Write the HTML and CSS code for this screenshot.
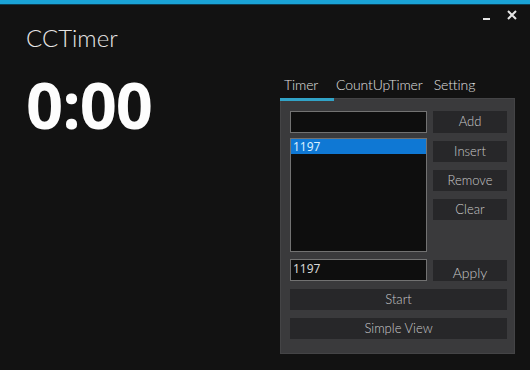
FILE: index.html
```html
<!DOCTYPE html>
<html lang="en">
  <head>
    <meta charset="UTF-8" />
    <title>CCTimer</title>
    <link rel="stylesheet" href="styles.css">
  </head>
  <body>
    <div class="topbar"></div>
    <div class="app">
      <div class="left">
        <div class="titulo">CCTimer</div>
        <div class="clock">0:00</div>
      </div>
      <div class="right">
        <div class="win-ctrl">
          <svg width="40" height="16" viewBox="0 0 40 16">
            <rect x="2" y="10" width="7" height="2" fill="#e6e6e6" />
            <path d="M27 3 L35 11 M35 3 L27 11" stroke="#e6e6e6" stroke-width="2" />
          </svg>
        </div>
        <div class="tabs">
          <div class="tab active">Timer</div>
          <div class="tab">CountUpTimer</div>
          <div class="tab">Setting</div>
        </div>
        <div class="panel">
          <div class="row-top">
            <div class="col-left">
              <div class="input"></div>
              <div class="list">
                <div class="item sel">1197</div>
              </div>
            </div>
            <div class="col-right">
              <div class="btn">Add</div>
              <div class="btn">Insert</div>
              <div class="btn">Remove</div>
              <div class="btn">Clear</div>
            </div>
          </div>
          <div class="row-apply">
            <div class="input">1197</div>
            <div class="btn apply">Apply</div>
          </div>
          <div class="btn wide">Start</div>
          <div class="btn wide">Simple View</div>
        </div>
      </div>
    </div>
  </body>
</html>
```

FILE: styles.css
```css
body {
  margin: 0;
  background: #121212;
  color: #e8e8e8;
  font-family: "Open Sans", sans-serif;
  width: 530px;
  height: 370px;
  overflow: hidden;
}
.topbar {
  height: 4px;
  background: #1aa3d6;
  border-bottom: 1px solid #0c3d52;
}
.app {
  display: flex;
}
.left {
  width: 280px;
  padding-left: 26px;
  box-sizing: border-box;
}
.titulo {
  font-family: "Lato", sans-serif;
  font-weight: 300;
  font-size: 24px;
  color: #e6e6e6;
  margin-top: 18px;
  line-height: 30px;
}
.clock {
  font-weight: 700;
  font-size: 65px;
  color: #fdfdfd;
  line-height: 70px;
  margin-top: 16px;
  letter-spacing: -1px;
}
.right {
  width: 250px;
}
.win-ctrl {
  display: flex;
  justify-content: flex-end;
  padding-right: 9px;
  margin-top: 3px;
  height: 16px;
}
.tabs {
  display: flex;
  margin-top: 53px;
  font-family: "Lato", sans-serif;
  font-weight: 300;
  font-size: 14px;
  letter-spacing: -0.1px;
  color: #e0e0e0;
  position: relative;
  z-index: 1;
}
.tab {
  padding: 0 9px 0 2px;
  height: 21px;
  line-height: 15px;
}
.tab.active {
  width: 54px;
  box-sizing: border-box;
  height: 24px;
  padding-left: 4px;
  border-bottom: 3px solid #31a3c7;
}
.panel {
  width: 235px;
  height: 256px;
  margin-top: -3px;
  box-sizing: border-box;
  background: #3a3a3c;
  border: 1px solid #444446;
  padding: 12px 7px 0 9px;
  display: flex;
  flex-direction: column;
  gap: 7px;
  font-size: 12px;
}
.row-top {
  display: flex;
  gap: 6px;
}
.col-left {
  width: 137px;
  display: flex;
  flex-direction: column;
  gap: 5px;
}
.col-right {
  width: 74px;
  display: flex;
  flex-direction: column;
  gap: 8px;
}
.input {
  height: 22px;
  box-sizing: border-box;
  background: #0e0e0e;
  border: 1px solid #727272;
  color: #d6d6d6;
  padding: 0 2px;
  line-height: 17px;
  font-family: "Noto Sans", sans-serif;
  font-size: 12px;
}
.list {
  height: 114px;
  box-sizing: border-box;
  background: #0e0e0e;
  border: 1px solid #727272;
}
.item {
  height: 15px;
  line-height: 15px;
  padding: 0 2px;
  font-family: "Noto Sans", sans-serif;
  font-size: 12px;
}
.item.sel {
  background: #0f78d4;
  color: #d9f0ff;
}
.btn {
  height: 21px;
  background: #272729;
  color: #c9c9c9;
  text-align: center;
  line-height: 21px;
  font-family: "Lato", sans-serif;
  font-weight: 300;
  font-size: 13px;
}
.col-right .btn:first-child {
  height: 22px;
}
.row-apply {
  display: flex;
  gap: 6px;
}
.row-apply .input {
  width: 137px;
}
.apply {
  width: 74px;
  line-height: 26px;
  margin-top: 1px;
  font-size: 14px;
}
.wide {
  width: 217px;
  margin-top: 1px;
}
```
